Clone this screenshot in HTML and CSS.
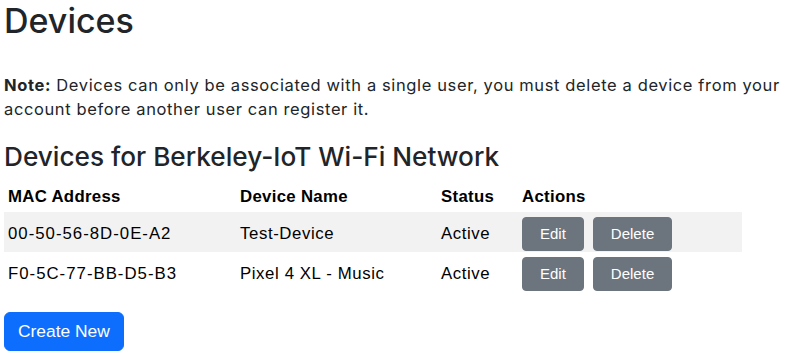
FILE: index.html
```html
<!DOCTYPE html>
<html lang="en">
<head>
<meta charset="utf-8">
<title>Devices</title>
<link rel="stylesheet" href="styles.css">
</head>
<body>
<main class="page">
  <h1 class="title">Devices</h1>
  <p class="note"><strong>Note:</strong> Devices can only be associated with a single user, you must delete a device from your account before another user can register it.</p>
  <h3 class="subtitle">Devices for Berkeley-IoT Wi-Fi Network</h3>
  <table class="devices">
    <thead>
      <tr>
        <th class="col-mac">MAC Address</th>
        <th class="col-name">Device Name</th>
        <th class="col-status">Status</th>
        <th class="col-actions">Actions</th>
      </tr>
    </thead>
    <tbody>
      <tr class="striped">
        <td class="mac">00-50-56-8D-0E-A2</td>
        <td>Test-Device</td>
        <td>Active</td>
        <td><div class="actions"><button class="btn btn-sm">Edit</button><button class="btn btn-sm">Delete</button></div></td>
      </tr>
      <tr>
        <td class="mac">F0-5C-77-BB-D5-B3</td>
        <td>Pixel 4 XL - Music</td>
        <td>Active</td>
        <td><div class="actions"><button class="btn btn-sm">Edit</button><button class="btn btn-sm">Delete</button></div></td>
      </tr>
    </tbody>
  </table>
  <button class="btn btn-primary">Create New</button>
</main>
</body>
</html>
```

FILE: styles.css
```css
html, body {
  margin: 0;
  padding: 0;
  background: #fff;
}

body {
  font-family: Inter, "Noto Sans", sans-serif;
  color: #212529;
}

.page {
  padding: 1px 4px 0 4px;
}

.title {
  font-family: Inter, sans-serif;
  font-size: 34px;
  font-weight: 500;
  line-height: 1.2;
  margin: 0 0 31px 0;
  color: #212529;
}

.note {
  font-size: 16.5px;
  line-height: 24px;
  letter-spacing: 0.62px;
  margin: 0 0 20px 0;
  max-width: 790px;
}

.note strong {
  font-weight: 700;
}

.subtitle {
  font-family: Inter, sans-serif;
  font-size: 26.2px;
  font-weight: 500;
  line-height: 1.2;
  margin: 0 0 8px 0;
  color: #212529;
}

.devices {
  width: 738px;
  border-collapse: collapse;
  table-layout: fixed;
  font-family: "Liberation Sans", Arial, sans-serif;
  font-size: 16.8px;
  color: #000;
}

.devices th,
.devices td {
  padding: 5px 4px 1px 4px;
  line-height: 24px;
  text-align: left;
  vertical-align: middle;
  letter-spacing: 0.6px;
  white-space: nowrap;
}

.devices th {
  font-weight: 700;
  letter-spacing: 0.3px;
  padding-bottom: 3px;
}

.devices td.mac {
  letter-spacing: 1px;
}

.col-mac { width: 224px; }
.col-name { width: 193px; }
.col-status { width: 73px; }
.col-actions { width: 216px; }

.devices tr.striped td {
  background: #f2f2f2;
}

.actions {
  display: flex;
  gap: 9px;
}

.btn {
  font-family: "Liberation Sans", Arial, sans-serif;
  color: #fff;
  border: 1px solid transparent;
  cursor: pointer;
  letter-spacing: 0;
}

.btn-sm {
  background: #6c757d;
  border-color: #6c757d;
  font-size: 15px;
  line-height: 20px;
  padding: 6px 17px;
  border-radius: 4px;
}

.btn-primary {
  margin-top: 20px;
  background: #0d6efd;
  border-color: #0d6efd;
  font-size: 17.4px;
  line-height: 25px;
  padding: 6px 13px;
  border-radius: 6px;
}
```
